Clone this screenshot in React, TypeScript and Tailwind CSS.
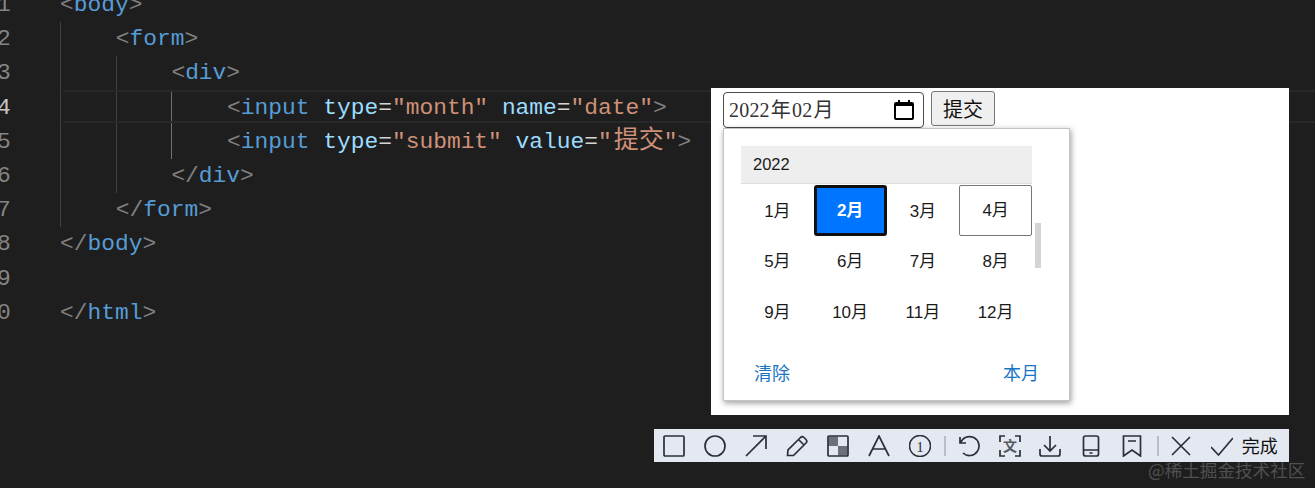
const months = ["1月", "2月", "3月", "4月", "5月", "6月", "7月", "8月", "9月", "10月", "11月", "12月"];

const Tag = ({ children }: { children: React.ReactNode }) => (
  <span className="text-[#808080]">{children}</span>
);
const Name = ({ children }: { children: React.ReactNode }) => (
  <span className="text-[#569cd6]">{children}</span>
);
const Attr = ({ children }: { children: React.ReactNode }) => (
  <span className="text-[#9cdcfe]">{children}</span>
);
const Str = ({ children }: { children: React.ReactNode }) => (
  <span className="text-[#ce9178]">{children}</span>
);
const Eq = () => <span className="text-[#d4d4d4]">=</span>;

const Line = ({ children }: { children?: React.ReactNode }) => (
  <div className="h-[34.2px] whitespace-pre">{children}</div>
);

const Ico = ({ children }: { children: React.ReactNode }) => (
  <svg viewBox="0 0 22 22" fill="none" stroke="#2b2f38" strokeWidth="1.7" className="w-[22px] h-[22px] shrink-0">
    {children}
  </svg>
);

const Sep = () => <div className="w-[2px] h-[20px] bg-[#b9bdc6] shrink-0" />;

const CodePane = () => (
  <div className="flex -mt-[12px] font-['Liberation_Mono','Noto_Sans_CJK_SC',monospace] text-[22.9px] leading-[34.2px]">
    <div className="w-[60px] shrink-0 text-[#858585]">
      {[1, 2, 3, 4, 5, 6, 7, 8, 9, 0].map((n) => (
        <div key={n} className={n === 4 ? "h-[34.2px] -ml-[3px] text-[#c6c6c6]" : "h-[34.2px] -ml-[3px]"}>
          {n}
        </div>
      ))}
    </div>
    <div>
      <Line>
        <Tag>&lt;</Tag><Name>body</Name><Tag>&gt;</Tag>
      </Line>
      <div className="border-l border-[#404040] pl-[54.7px]">
        <Line>
          <Tag>&lt;</Tag><Name>form</Name><Tag>&gt;</Tag>
        </Line>
        <div className="border-l border-[#404040] pl-[54.7px]">
          <Line>
            <Tag>&lt;</Tag><Name>div</Name><Tag>&gt;</Tag>
          </Line>
          <div className="border-l border-[#707070] pl-[54.7px]">
            <Line>
              <Tag>&lt;</Tag><Name>input</Name> <Attr>type</Attr><Eq /><Str>"month"</Str> <Attr>name</Attr><Eq /><Str>"date"</Str><Tag>&gt;</Tag>
            </Line>
            <Line>
              <Tag>&lt;</Tag><Name>input</Name> <Attr>type</Attr><Eq /><Str>"submit"</Str> <Attr>value</Attr><Eq /><Str>"<span className="ml-[2px] text-[25px] leading-none">提交</span>"</Str><Tag>&gt;</Tag>
            </Line>
          </div>
          <Line>
            <Tag>&lt;/</Tag><Name>div</Name><Tag>&gt;</Tag>
          </Line>
        </div>
        <Line>
          <Tag>&lt;/</Tag><Name>form</Name><Tag>&gt;</Tag>
        </Line>
      </div>
      <Line>
        <Tag>&lt;/</Tag><Name>body</Name><Tag>&gt;</Tag>
      </Line>
      <Line />
      <Line>
        <Tag>&lt;/</Tag><Name>html</Name><Tag>&gt;</Tag>
      </Line>
    </div>
  </div>
);

const MonthPopup = () => (
  <div className="relative w-[347px] h-[273px] bg-white border border-[#c4c4c4] shadow-[1px_2px_6px_rgba(0,0,0,0.4)] pt-[17px] pl-[17px] font-['Liberation_Sans','Noto_Sans_CJK_SC',sans-serif] text-[#1a1a1a]">
    <div className="w-[291px] h-[38px] bg-[#eeeeee] border-b border-[#dddddd] pl-[12px] text-[16.5px] leading-[36px]">
      2022
    </div>
    <div className="grid grid-cols-4 w-[291px] auto-rows-[50.5px] mt-px text-[17px]">
      {months.map((m) => {
        if (m === "2月") {
          return (
            <div key={m} className="h-[51px] flex items-center justify-center bg-[#0075ff] border-[3px] border-[#101010] rounded-[3px] font-bold text-white">
              {m}
            </div>
          );
        }
        if (m === "4月") {
          return (
            <div key={m} className="h-[51px] pt-[1px] flex items-center justify-center border border-[#767676] rounded-[2px]">
              {m}
            </div>
          );
        }
        return (
          <div key={m} className="h-[51px] pt-[2px] flex items-center justify-center">
            {m}
          </div>
        );
      })}
    </div>
    <div className="flex justify-between w-[298px] pl-[13px] mt-[25px] text-[18px] leading-[24px] text-[#1a75c4]">
      <span>清除</span>
      <span>本月</span>
    </div>
    <div className="absolute left-[311px] top-[94px] w-[6px] h-[45px] bg-[#d4d4d4]" />
  </div>
);

const ScreenshotPanel = () => (
  <div className="absolute left-[711px] top-[88px] w-[578px] h-[327px] bg-white pl-[12px] pt-[4px]">
    <div className="flex items-start gap-[7px]">
      <div className="w-[201px] h-[36px] flex items-center justify-between pl-[5px] pr-[9px] border border-[#4a4a4a] rounded-[4px] text-[20px] text-[#333] font-['Liberation_Serif','Noto_Sans_CJK_SC',serif]">
        <span className="tracking-[0.2px]">2022<span className="mx-[1px]">年</span>02<span className="ml-[1px]">月</span></span>
        <svg viewBox="0 0 20 20" className="w-[20px] h-[20px]">
          <path d="M4 0h2v2h8V0h2v2h2a2 2 0 0 1 2 2v14a2 2 0 0 1-2 2H2a2 2 0 0 1-2-2V4a2 2 0 0 1 2-2h2zM2 6v12h16V6z" fill="#000" fillRule="evenodd" />
        </svg>
      </div>
      <button className="w-[64px] h-[35px] -mt-px bg-[#efefef] border border-[#767676] rounded-[3px] text-[20px] text-[#111] font-['Noto_Sans_CJK_SC',sans-serif]">
        提交
      </button>
    </div>
    <MonthPopup />
  </div>
);

const Toolbar = () => (
  <div className="absolute left-[654px] top-[429px] w-[635px] h-[33px] bg-[#e4e8f0] flex items-center pl-[9px]">
    <div className="flex items-center gap-[19px]">
      <Ico><rect x="1" y="1" width="20" height="20" rx="1" /></Ico>
      <Ico><circle cx="11" cy="11" r="10" /></Ico>
      <Ico><path d="M1 21 21 1M8 1h13v13" /></Ico>
      <Ico><path d="M1.5 20.5 2 15 14.5 2.5q1.8-1.6 3.5 0l2 2q1.6 1.7 0 3.5L7.5 20.5zM12.5 4.5l5.5 5.5" /></Ico>
      <Ico>
        <rect x="1.5" y="1.5" width="9.5" height="9.5" fill="#6b7079" stroke="none" />
        <rect x="11" y="11" width="9.5" height="9.5" fill="#6b7079" stroke="none" />
        <rect x="1" y="1" width="20" height="20" rx="1" />
      </Ico>
      <Ico><path d="M1 21 11 1l10 20M5 14h12" /></Ico>
      <Ico>
        <circle cx="11" cy="11" r="10.5" strokeWidth="1.5" />
        <text x="11" y="16.5" textAnchor="middle" fontSize="15" fontFamily="Liberation Serif, serif" fill="#2b2f38" stroke="none">1</text>
      </Ico>
    </div>
    <div className="ml-[13px]"><Sep /></div>
    <div className="ml-[12px] flex items-center gap-[18.7px]">
      <Ico><path d="M2 2v6h6M2.5 8A9.5 9.5 0 1 1 5 18" /></Ico>
      <Ico>
        <path d="M1 7V1h5M16 1h5v6M21 15v6h-5M6 21H1v-6" />
        <text x="11" y="16" textAnchor="middle" fontSize="14" fontWeight="700" fontFamily="Noto Sans CJK SC, sans-serif" fill="#555a63" stroke="none">文</text>
      </Ico>
      <Ico><path d="M11 1v15M5 10l6 6 6-6M1 14v5a2 2 0 0 0 2 2h16a2 2 0 0 0 2-2v-5" /></Ico>
      <Ico>
        <rect x="3.5" y="1" width="15" height="20" rx="2" />
        <path d="M3.5 15h15M9.5 18h3" />
      </Ico>
      <Ico><path d="M2.5 1h17v20l-8.5-6-8.5 6zM7 6h8" /></Ico>
    </div>
    <div className="ml-[14px]"><Sep /></div>
    <div className="ml-[11px] flex items-center gap-[19px]">
      <Ico><path d="M2 2l18 18M20 2 2 20" /></Ico>
      <Ico><path d="M0 12l7.5 8L22 3" /></Ico>
    </div>
    <span className="ml-[9px] text-[18px] text-[#111] font-['Noto_Sans_CJK_SC',sans-serif]">完成</span>
  </div>
);

export default function App() {
  return (
    <div className="relative w-[1315px] h-[488px] overflow-hidden bg-[#1e1e1e]">
      <CodePane />
      <div className="absolute left-[63px] right-0 top-[90px] h-[33px] border-y-2 border-[#282828]" />
      <ScreenshotPanel />
      <Toolbar />
      <div className="absolute left-[1148px] top-[458px] text-[17.6px] leading-[24px] text-[#505050] font-['Noto_Sans_CJK_SC',sans-serif]">
        @稀土掘金技术社区
      </div>
    </div>
  );
}
